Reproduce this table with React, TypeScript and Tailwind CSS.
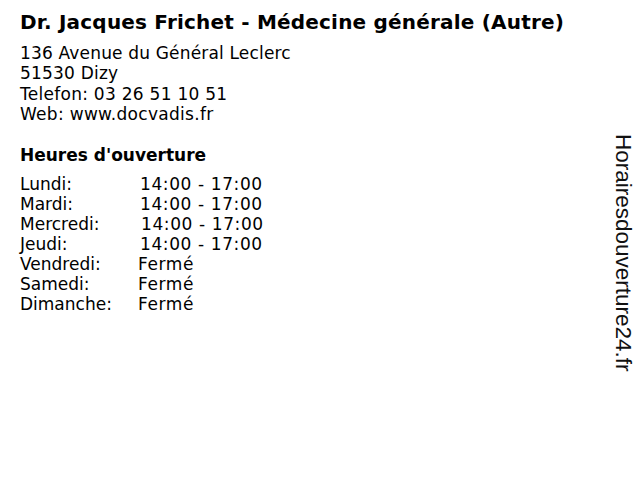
const hours = [
  { day: "Lundi:", time: "14:00 - 17:00", pad: "pl-[2px]" },
  { day: "Mardi:", time: "14:00 - 17:00", pad: "pl-[2px]" },
  { day: "Mercredi:", time: "14:00 - 17:00", pad: "pl-[3px]" },
  { day: "Jeudi:", time: "14:00 - 17:00", pad: "pl-[2px]" },
  { day: "Vendredi:", time: "Fermé", pad: "" },
  { day: "Samedi:", time: "Fermé", pad: "" },
  { day: "Dimanche:", time: "Fermé", pad: "" },
];

export default function App() {
  return (
    <div className="w-[640px] h-[480px] bg-white flex flex-row justify-between text-black font-['DejaVu_Sans',sans-serif]">
      <div className="pl-[20px] pt-[10px]">
        <h1 className="text-[20px] leading-[24px] font-bold tracking-[0.2px]">
          Dr. Jacques Frichet - Médecine générale (Autre)
        </h1>
        <div className="mt-[9px] text-[17px] leading-[20.3px]">
          <p className="tracking-[0.17px]">136 Avenue du Général Leclerc</p>
          <p className="tracking-[0.2px]">51530 Dizy</p>
          <p className="tracking-[0.27px]">Telefon: 03 26 51 10 51</p>
          <p className="tracking-[0.3px]">Web: www.docvadis.fr</p>
        </div>
        <h2 className="mt-[21px] text-[17px] leading-[20px] font-bold">
          Heures d'ouverture
        </h2>
        <div className="mt-[9px] text-[17px] leading-[20px]">
          {hours.map((h) => (
            <div key={h.day} className="flex flex-row">
              <span className="w-[118px]">{h.day}</span>
              <span className={`${h.pad} tracking-[0.6px]`}>{h.time}</span>
            </div>
          ))}
        </div>
      </div>
      <div className="pr-[5px] pt-[134px]">
        <span className="[writing-mode:vertical-rl] text-[22.5px] leading-[24px] text-[#111] font-['Liberation_Sans',sans-serif]">
          Horairesdouverture24.fr
        </span>
      </div>
    </div>
  );
}
